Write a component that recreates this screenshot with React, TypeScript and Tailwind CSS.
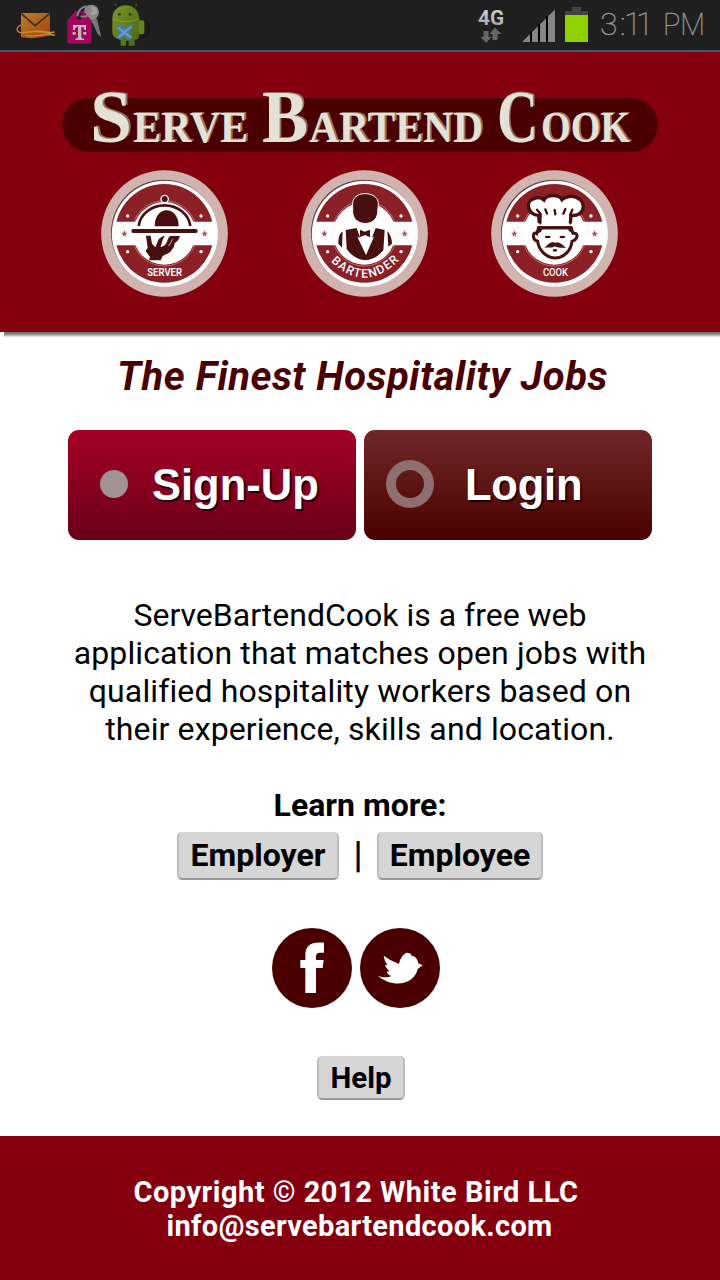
import type { ReactNode } from 'react';

function NotificationIcons() {
  return (
    <svg className="h-[50px] w-[160px]" viewBox="0 0 480 150">
      <defs>
        <linearGradient id="mail" x1="0" y1="0" x2="1" y2="1">
          <stop offset="0" stopColor="#b98028" />
          <stop offset="1" stopColor="#a63e10" />
        </linearGradient>
        <linearGradient id="robot" x1="0" y1="0" x2="1" y2="1">
          <stop offset="0" stopColor="#7a9628" />
          <stop offset="1" stopColor="#48650f" />
        </linearGradient>
      </defs>
      <path d="M63 39H150V106Q108 119 63 112Z" fill="url(#mail)" />
      <path d="M64 41L105 77L149 41" fill="none" stroke="#3d2a12" strokeWidth="5" />
      <path d="M63 75C45 83 48 101 74 98C108 91 133 95 165 106C130 98 105 113 78 106M90 97C120 84 138 102 164 96" fill="none" stroke="#c38c35" strokeWidth="4" />
      <path d="M272 42L291 58L304 112L293 102L278 70L262 54Z" fill="#777" />
      <circle cx="274" cy="37" r="23" fill="#888" />
      <circle cx="279" cy="33" r="12" fill="#a0a0a0" />
      <path d="M226 34H251L275 62V124Q275 131 266 131H211Q202 131 202 123V61Z" fill="#a3075d" />
      <circle cx="239" cy="49" r="10" fill="#202020" />
      <path d="M232 49C235 20 266 10 273 31C273 43 257 53 242 49" fill="none" stroke="#858585" strokeWidth="6" />
      <path d="M219 75H258V90H253Q252 80 244 80V112Q244 116 252 116V120H226V116Q234 116 234 112V80Q226 80 224 90H219ZM218 96H227V104H218ZM250 96H259V104H250Z" fill="#c2b9be" />
      <ellipse cx="430" cy="88" rx="22" ry="28" fill="#191919" />
      <path d="M349 17L344 12M406 17L411 12" stroke="#4a5f20" strokeWidth="4" />
      <path d="M337 54C338 5 415 1 418 55V105Q417 118 404 120V137H386V122H378V137H362V119Q337 115 337 96Z" fill="url(#robot)" />
      <rect x="416" y="61" width="17" height="42" rx="6" fill="#658221" />
      <path d="M339 58Q380 72 417 57" fill="none" stroke="#8fa549" strokeWidth="2" />
      <circle cx="358" cy="43" r="4" fill="#303c16" />
      <circle cx="390" cy="43" r="4" fill="#303c16" />
      <path d="M348 80L361 73L375 84L391 73L401 81L387 97L398 113L385 120L372 109L357 119L348 111L360 96Z" fill="#467cad" />
      <path d="M353 82L394 113M393 80L356 112" stroke="#6b9bc2" strokeWidth="6" />
    </svg>
  );
}

function SystemIcons() {
  return (
    <svg className="h-[50px] w-[250px]" viewBox="0 0 250 50">
      <defs>
        <linearGradient id="net" x1="0" y1="0" x2="0" y2="1">
          <stop offset="0" stopColor="#dedede" />
          <stop offset="1" stopColor="#9a9a9a" />
        </linearGradient>
      </defs>
      <text x="8" y="25" fontFamily="Roboto, sans-serif" fontWeight="700" fontSize="20.5" textLength="26" lengthAdjust="spacingAndGlyphs" fill="url(#net)">4G</text>
      <path d="M13.5 31H18.5V37H21.5L16 43L10.5 37H13.5ZM22.5 40H27.5V34H31.5L25 27.5L19.5 34H22.5Z" fill="#666" />
      <path d="M52 42L85 9.5V42Z" fill="#858585" />
      <path d="M60 32H62V42H60ZM68 24H70V42H68ZM76 16H78V42H76Z" fill="#000" />
      <path d="M95 11H102V7H111V11H118V15H95Z" fill="#434343" />
      <path d="M95 15H118V42H95Z" fill="#90d000" />
      <g fontFamily="Roboto, sans-serif" fontWeight="100" fontSize="32" fill="#999" stroke="#999" strokeWidth=".4">
        <text x="130 150 154 166" y="35">3:11</text>
        <text x="193" y="35" textLength="42" lengthAdjust="spacingAndGlyphs">PM</text>
      </g>
    </svg>
  );
}

const letters = [
  { text: 'S', x: 90, size: 74, length: 42 },
  { text: 'ERVE', x: 133, size: 44.5, length: 115 },
  { text: 'B', x: 262, size: 74, length: 46 },
  { text: 'ARTEND', x: 309, size: 44.5, length: 174 },
  { text: 'C', x: 497, size: 74, length: 41 },
  { text: 'OOK', x: 541, size: 44.5, length: 89 },
];

function Wordmark() {
  return (
    <svg className="h-[88px] w-[598px] shrink-0" viewBox="61 72 598 88">
      <rect x="62" y="98" width="596" height="54" rx="27" fill="#4a0000" />
      <g className="[text-shadow:2px_-1px_0_#937065]" fontFamily="Liberation Serif, serif" fontWeight="700" fill="#e3e2d5">
        {letters.map(({ text, x, size, length }) => (
          <text key={text} x={x} y="142" fontSize={size} textLength={length} lengthAdjust="spacingAndGlyphs">{text}</text>
        ))}
      </g>
    </svg>
  );
}

const star = '0,-10 3,-3 10,-3 4,2 6,9 0,5 -6,9 -4,2 -10,-3 -3,-3';

function Badge({ children }: { children: ReactNode }) {
  return (
    <svg className="size-[127px]" viewBox="34 30 381 381">
      <circle cx="224.5" cy="220.5" r="190" fill="#d1b4b0" />
      <circle cx="223" cy="218" r="159" fill="#67393b" />
      <circle cx="225.5" cy="221.5" r="159" fill="#fff" />
      <circle cx="224" cy="220" r="148" fill="#8b2026" />
      <path d="M78 185H370Q377 220 370 256H78Q70 220 78 185Z" fill="#fff" />
      <circle cx="224" cy="220" r="98" fill="none" stroke="#d48e91" strokeWidth="2" />
      <circle cx="224" cy="220" r="94" fill="#fff" />
      <path d="M125 187H323V254H125Z" fill="#fff" />
      {[114, 334].map((x) => (
        <g key={x} fill="#fff">
          <circle cx={x} cy="168" r="5" />
          <circle cx={x} cy="275" r="5" />
        </g>
      ))}
      <polygon points={star} transform="translate(104 221)" fill="#b54c54" />
      <polygon points={star} transform="translate(345 221)" fill="#b54c54" />
      {children}
    </svg>
  );
}

function ServerBadge() {
  return (
    <Badge>
      <circle cx="225" cy="117" r="13" fill="#fff" />
      <circle cx="225" cy="117" r="9" fill="#470f10" />
      <path d="M147 200A78 73 0 0 1 302 200" fill="none" stroke="#fff" strokeWidth="15" />
      <path d="M147 198A78 70 0 0 1 302 198" fill="none" stroke="#470f10" strokeWidth="8" />
      <path d="M195 199C195 134 267 135 267 199Z" fill="#470f10" />
      <rect x="120" y="201" width="209" height="24" rx="12" fill="#fff" />
      <rect x="125" y="207" width="199" height="12" rx="6" fill="#470f10" />
      <path d="M169 227H183L187 251L197 262L206 240Q213 229 226 228C217 237 218 251 212 261C236 258 230 235 242 228H271L266 240L255 250L252 262L241 277L219 288L213 301H178L181 291L168 273L174 263Z" fill="#470f10" />
      <path d="M237 258L249 238" fill="none" stroke="#fff" strokeWidth="2" />
      <text x="173" y="347" fontFamily="Roboto, sans-serif" fontSize="33" fontWeight="600" textLength="104" lengthAdjust="spacingAndGlyphs" fill="#fff">SERVER</text>
    </Badge>
  );
}

function BartenderBadge() {
  return (
    <Badge>
      <path d="M189 133C186 89 268 91 266 133L264 157C262 202 191 201 189 157Z" fill="#470f10" stroke="#fff" strokeWidth="3" />
      <path d="M168 210L201 204L229 281L258 204L285 210L281 271Q257 300 225 301Q191 296 171 267ZM146 251Q145 222 159 214L157 263ZM293 213Q306 226 307 251L296 260Z" fill="#470f10" />
      <path d="M202 204L213 234L203 230L229 285L253 230L245 233L257 204" fill="#fff" />
      <path d="M211 209L225 215L241 209V232L226 225L211 231Z" fill="#470f10" />
      <path id="bartender-arc" d="M121 302Q224 405 330 299" fill="none" />
      <text fontFamily="Roboto, sans-serif" fontSize="36" fontWeight="500" fill="#fff">
        <textPath href="#bartender-arc" startOffset="3" textLength="234">BARTENDER</textPath>
      </text>
    </Badge>
  );
}

function CookBadge() {
  return (
    <Badge>
      <path d="M179 189L177 166C145 167 137 125 158 118Q179 106 193 120C202 102 239 104 247 119C268 98 320 112 309 149Q301 169 274 166L272 189" fill="#fff" stroke="#470f10" strokeWidth="10" />
      <path d="M172 149L183 162L182 190M278 149L272 164V190M197 148L202 161M225 150L227 163M257 147L251 161" fill="none" stroke="#470f10" strokeWidth="7" strokeLinecap="round" />
      <path d="M177 203L171 221C158 212 157 240 174 244C177 270 199 293 225 294C253 294 274 272 277 244C294 238 299 217 280 220L274 203Z" fill="#fff" stroke="#470f10" strokeWidth="9" />
      <path d="M174 199H278L281 222L268 213L265 208H188L184 216L171 221Z" fill="#470f10" />
      <ellipse cx="204" cy="231" rx="9" ry="4" fill="#470f10" />
      <ellipse cx="248" cy="231" rx="9" ry="4" fill="#470f10" />
      <path d="M194 264C208 249 219 242 226 249C235 242 247 251 259 264C245 261 237 266 226 259C217 266 207 260 194 264Z" fill="#470f10" />
      <ellipse cx="226" cy="271" rx="7" ry="4" fill="#470f10" />
      <text x="190" y="347" fontFamily="Roboto, sans-serif" fontSize="33" fontWeight="500" textLength="75" lengthAdjust="spacingAndGlyphs" fill="#fff">COOK</text>
    </Badge>
  );
}

function LinkButton({ className, children }: { className: string; children: ReactNode }) {
  return (
    <button className={`flex items-center justify-center rounded-[5px] border-x-2 border-b-2 border-x-[#bdbdbd] border-b-[#999] bg-[#d6d6d6] font-bold whitespace-nowrap ${className}`}>
      {children}
    </button>
  );
}

export default function App() {
  return (
    <div className="flex h-[1280px] w-[720px] flex-col overflow-hidden bg-white font-['Roboto',sans-serif] text-black">
      <div className="flex h-[52px] shrink-0 justify-between border-b-2 border-[#415969] bg-[#1f1f1f]">
        <NotificationIcons />
        <SystemIcons />
      </div>

      <header className="flex h-[280px] shrink-0 flex-col items-center bg-[#84000e] pt-5 shadow-[4px_2px_0_#777,4px_3px_0_#999,4px_4px_0_#bbb,4px_5px_0_#ddd]">
        <Wordmark />
        <div className="mt-[10px] flex w-full pl-[101px]">
          <ServerBadge />
          <div className="ml-[73px]"><BartenderBadge /></div>
          <div className="ml-[63px]"><CookBadge /></div>
        </div>
      </header>

      <main className="flex h-[804px] shrink-0 flex-col items-center">
        <h1 className="mt-[21px] h-12 pl-[5px] text-[40px] leading-[48px] font-bold tracking-[0.5px] whitespace-nowrap text-[#4a0000] italic">The Finest Hospitality Jobs</h1>

        <div className="mt-[29px] flex gap-2 font-['Liberation_Sans',sans-serif] font-bold text-white">
          <button className="flex h-[110px] w-[288px] items-center rounded-[11px] bg-linear-to-b from-[#a60026] to-[#6a0017] pb-[2px] pl-8">
            <span className="size-7 rounded-full bg-[#a29192]" />
            <span className="ml-6 pt-1 text-[43.5px] leading-none whitespace-nowrap [text-shadow:2px_2px_1px_#25000a]">Sign-Up</span>
          </button>
          <button className="flex h-[110px] w-[288px] items-center rounded-[11px] bg-linear-to-b from-[#702728] to-[#4a0000] pb-[2px] pl-[22px]">
            <span className="size-12 rounded-full border-[10px] border-[#8f6e6f]" />
            <span className="ml-[31px] pt-1 text-[43.5px] leading-none tracking-[-0.2px] whitespace-nowrap [text-shadow:2px_2px_1px_#210000]">Login</span>
          </button>
        </div>

        <p className="mt-14 w-[600px] text-center text-[32px] leading-[38px] tracking-[0.12px]">
          <span className="tracking-normal">ServeBartendCook is a free web</span><br />
          application that matches open jobs with<br />
          qualified hospitality workers based on<br />
          their experience, skills and location.
        </p>

        <p className="mt-[38px] text-[32px] leading-[38px] font-bold">Learn more:</p>
        <div className="mt-2 flex h-12 items-center text-[32px]">
          <LinkButton className="h-12 w-[162px]">Employer</LinkButton>
          <span className="w-[38px] pb-[2px] text-center text-[36px] leading-none font-bold">|</span>
          <LinkButton className="h-12 w-[166px]">Employee</LinkButton>
        </div>

        <div className="mt-12 mr-2 flex gap-2">
          <svg className="size-20" viewBox="0 0 240 240">
            <circle cx="120" cy="120" r="120" fill="#4a0000" />
            <path d="M156 44V74H143Q132 74 132 86V96H155L152 120H132V195H100V120H85V96H100V81C100 53 116 40 156 44Z" fill="#fff" />
          </svg>
          <svg className="size-20" viewBox="0 0 240 240">
            <circle cx="120" cy="120" r="120" fill="#4a0000" />
            <path d="M188 112L173 123C164 169 99 183 54 143Q75 152 95 144Q83 141 80 131L88 130Q78 121 75 111L82 111Q73 99 71 83Q91 98 117 108C120 90 132 75 142 74L155 78L151 82Q171 84 175 106Z" fill="#fff" />
          </svg>
        </div>

        <div className="mt-12 ml-[2px]">
          <LinkButton className="h-11 w-[88px] pt-[2px] text-[29.5px]">Help</LinkButton>
        </div>
      </main>

      <footer className="h-[144px] shrink-0 bg-[#84000e] pt-[39px] pr-2 text-center text-[29px] leading-[34px] font-bold text-white">
        <div className="tracking-[0.5px]">Copyright © 2012 White Bird LLC</div>
        <div className="pl-[7px] tracking-[0.33px]">info@servebartendcook.com</div>
      </footer>
    </div>
  );
}
